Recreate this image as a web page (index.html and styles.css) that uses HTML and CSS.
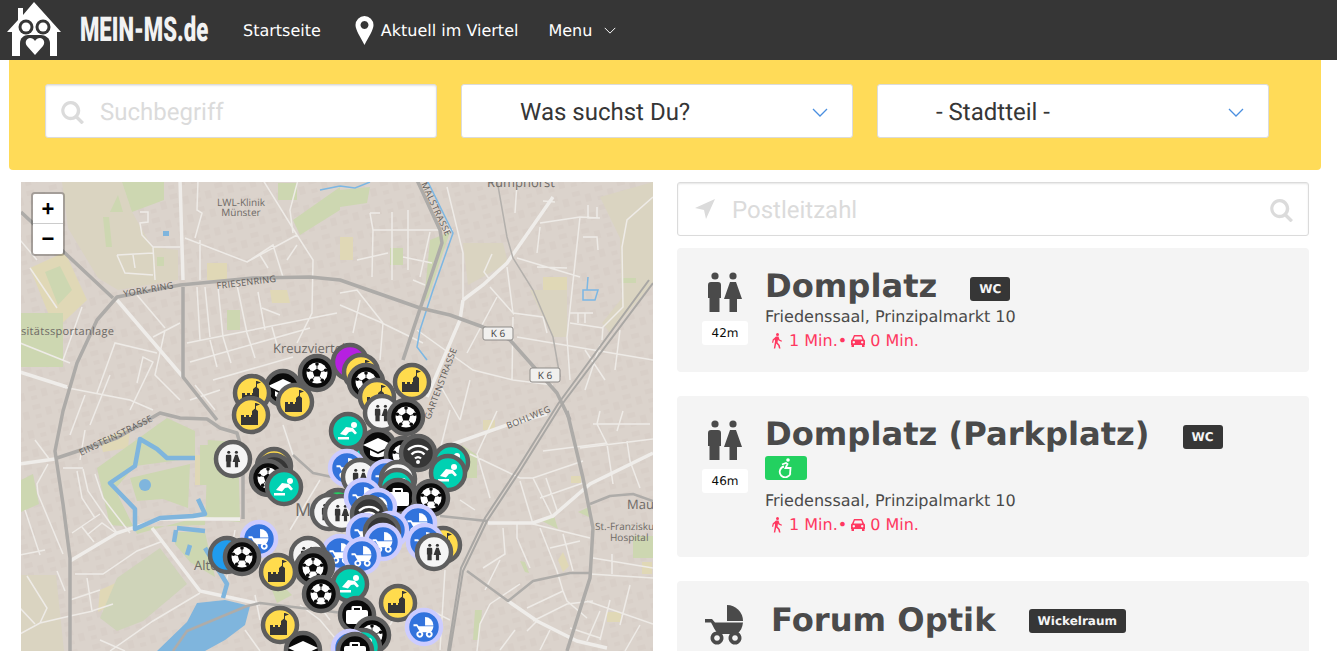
FILE: index.html
```html
<!DOCTYPE html>
<html>
<head>
  <title>MEIN-MS.de</title>
  <link rel="stylesheet" href="styles.css">
</head>
<body>
  <!-- Shared icons -->
  <svg class="icon-defs" width="0" height="0">
    <defs>
      <symbol id="icon-wc" viewBox="0 0 34 40">
        <circle cx="7" cy="4" r="3.600"/>
        <circle cx="25" cy="4" r="3.600"/>
        <path d="M0 13a3 3 0 0 1 3-3h7a3 3 0 0 1 3 3v13h-1.500v14H1.500V26H0z"/>
        <path d="M22 10h6l6 17h-5v13h-7.500V27H16z"/>
      </symbol>
      <symbol id="icon-pram" viewBox="0 0 40 40">
        <path d="M22 0a16 16 0 0 1 16 16H22z"/>
        <path d="M0 14h7l3 3.500h28c-.5 5-2.500 9-6 11.500H13.500C10 26 8 21 6 17.500H0z"/>
        <path fill-rule="evenodd" d="M12 26.500a6.500 6.500 0 1 0 .01 0zm0 3.700a2.800 2.800 0 1 1-.01 0zM30 26.500a6.500 6.500 0 1 0 .01 0zm0 3.700a2.800 2.800 0 1 1-.01 0z"/>
      </symbol>
      <symbol id="icon-walk" viewBox="0 0 12 16">
        <circle cx="6.500" cy="1.600" r="1.500"/>
        <path d="M5 3.500h2.500l1 3 2.500 1.200-.5 1-3-1.300-.5-1-.5 3 2.200 2.500.8 3.600H8l-.8-3-2-2-1 5H2.800l1.200-7-.2-2-1 .8-.6 2.500H1l.7-3.300z"/>
      </symbol>
      <symbol id="icon-car" viewBox="0 0 14 12">
        <path fill-rule="evenodd" d="M3 0h8l2 4.500a1.500 1.500 0 0 1 1 1.500v4h-.5v2h-2.500v-2H3v2H.5v-2H0V6a1.500 1.500 0 0 1 1-1.500zm.8 1.500L2.700 4.500h8.600l-1.100-3zM2.800 6a1.200 1.200 0 1 0 .01 0zm8.400 0a1.200 1.200 0 1 0 .01 0z"/>
      </symbol>
      <symbol id="icon-search" viewBox="0 0 24 24">
        <path fill-rule="evenodd" d="M10 0a10 10 0 0 1 8 16l6 6-2.500 2.500-6-6A10 10 0 1 1 10 0zm0 3.500a6.500 6.500 0 1 0 .01 0z"/>
      </symbol>
      <symbol id="icon-chevron" viewBox="0 0 16 9">
        <path d="M1 1l7 7 7-7" fill="none" stroke="currentColor" stroke-width="1.300"/>
      </symbol>

      <!-- Map marker glyphs, centred on 0,0 -->
      <g id="g-castle" class="glyph-dark">
        <path d="M-10 10V0h3v2h2V0h3v2h2V0h1v-4l3-2.500 3 2.500v14zM4-6v-6h1l4 1.500-4 1.500v3z"/>
      </g>
      <g id="g-ball">
        <circle r="10.500" class="glyph-white"/>
        <path class="glyph-black" d="M0-4.500l4.300 3.100-1.600 5h-5.400l-1.600-5z"/>
        <path class="ball-seam" d="M0-4.500V-8M4.300-1.400l3.300-1M2.700 3.600l2 2.800M-2.700 3.600l-2 2.800M-4.300-1.400l-3.300-1"/>
        <circle cy="-9" r="1.800" class="glyph-black"/>
        <circle cx="8.600" cy="-2.800" r="1.800" class="glyph-black"/>
        <circle cx="5.300" cy="7.300" r="1.800" class="glyph-black"/>
        <circle cx="-5.300" cy="7.300" r="1.800" class="glyph-black"/>
        <circle cx="-8.600" cy="-2.800" r="1.800" class="glyph-black"/>
      </g>
      <g id="g-cap" class="glyph-white">
        <path d="M0-9L15-2 0 5-15-2zM-8 3l8 4 8-4v5c-4 3-12 3-16 0z"/>
      </g>
      <g id="g-wc" class="glyph-dark">
        <use href="#icon-wc" x="-7.500" y="-8.500" width="15" height="17"/>
      </g>
      <g id="g-swim" class="glyph-white">
        <circle cx="6" cy="-6" r="3"/>
        <path d="M-8 3l6-7 7 1 4 5-2 1.500-3-3-3 .5-3 3.500zM-10 6h11v2.500h-11z"/>
      </g>
      <g id="g-pram" class="glyph-white">
        <use href="#icon-pram" x="-11" y="-10" width="22" height="21"/>
      </g>
      <g id="g-wifi">
        <path class="glyph-line" d="M-10-3a14 14 0 0 1 20 0M-6.500 1.500a9 9 0 0 1 13 0M-3 5.500a4.500 4.500 0 0 1 6 0"/>
        <circle cy="9" r="2" class="glyph-white"/>
      </g>
      <g id="g-case" class="glyph-white">
        <path fill-rule="evenodd" d="M-3.500-9h7a1.500 1.500 0 0 1 1.500 1.500V-5H9a2 2 0 0 1 2 2V7a2 2 0 0 1-2 2H-9a2 2 0 0 1-2-2V-3a2 2 0 0 1 2-2h3.500v-2.500A1.500 1.500 0 0 1-3.500-9zm.5 2v2h6v-2z"/>
      </g>

      <g id="m-castle"><circle r="17" class="m-ring m-yellow"/><use href="#g-castle"/></g>
      <g id="m-ball"><circle r="17" class="m-ring m-black"/><use href="#g-ball"/></g>
      <g id="m-cap"><circle r="17" class="m-ring m-black"/><use href="#g-cap"/></g>
      <g id="m-case"><circle r="17" class="m-ring m-black"/><use href="#g-case"/></g>
      <g id="m-wc"><circle r="17" class="m-ring m-light"/><use href="#g-wc"/></g>
      <g id="m-swim"><circle r="17" class="m-ring m-teal"/><use href="#g-swim"/></g>
      <g id="m-wifi"><circle r="17" class="m-ring m-dark"/><use href="#g-wifi"/></g>
      <g id="m-pram"><circle r="17" class="m-ring m-blue"/><use href="#g-pram"/></g>
      <g id="m-purple"><circle r="17" class="m-ring m-purple"/></g>
      <g id="m-sky"><circle r="17" class="m-ring m-sky"/></g>
      <g id="m-green"><circle r="17" class="m-ring m-green"/></g>

      <pattern id="blocks" width="23" height="19" patternUnits="userSpaceOnUse" patternTransform="rotate(-14)">
        <rect x="2" y="2" width="8" height="5" class="block"/>
        <rect x="14" y="7" width="6" height="8" class="block"/>
        <rect x="3" y="12" width="6" height="4" class="block"/>
      </pattern>
    </defs>
  </svg>

  <nav class="navbar">
    <a class="brand" href="#">
      <svg class="brand-house" viewBox="0 0 54 54">
        <path class="house-white" d="M27 0l27 30h-4v24H5V30H0L11 18V6h5v7z"/>
        <path class="house-dark" d="M13 54V41c0-5 4-8 8-8h13c4 0 9 3 9 8v13z"/>
        <circle cx="19" cy="25" r="7.500" class="house-dark"/>
        <circle cx="36" cy="25" r="7.500" class="house-dark"/>
        <circle cx="19" cy="25" r="4.500" class="house-white"/>
        <circle cx="36" cy="25" r="4.500" class="house-white"/>
        <path class="house-white" d="M28 53L20 44c-3-4 0-8 3-8 2 0 4 1 5 3 1-2 3-3 5-3 3 0 6 4 3 8z"/>
      </svg>
      <span class="brand-text">MEIN-MS.de</span>
    </a>
    <a class="nav-item" href="#">Startseite</a>
    <a class="nav-item" href="#">
      <svg class="nav-pin" viewBox="0 0 18 29">
        <path fill-rule="evenodd" d="M9 0a9 9 0 0 1 9 9c0 5-5 12-9 20C5 21 0 14 0 9a9 9 0 0 1 9-9zm0 5a4 4 0 1 0 .01 0z"/>
      </svg>
      Aktuell im Viertel
    </a>
    <a class="nav-item nav-menu" href="#">
      Menu
      <svg class="nav-chevron"><use href="#icon-chevron"/></svg>
    </a>
  </nav>

  <section class="filters">
    <div class="field">
      <svg class="field-search"><use href="#icon-search"/></svg>
      <span class="placeholder">Suchbegriff</span>
    </div>
    <div class="field field-select">
      <span>Was suchst Du?</span>
      <svg class="select-chevron"><use href="#icon-chevron"/></svg>
    </div>
    <div class="field field-select">
      <span>- Stadtteil -</span>
      <svg class="select-chevron"><use href="#icon-chevron"/></svg>
    </div>
  </section>

  <main class="content">
    <div class="map">
      <svg class="map-svg" viewBox="21 182 632 469">
        <rect x="21" y="182" width="632" height="469" class="land"/>
        <rect x="21" y="182" width="632" height="469" fill="url(#blocks)"/>

        <!-- Land use -->
        <path class="tan" d="M62 182h60l10 30 20 35 26 3v30l-60 10-20-12-30-50zM600 197l53-15v101l-43 50-8-10 20-25-2-60zM530 290h37v47h-14zM463 243h40l5 20-40 22zM21 575h35l8 76H21z"/>
        <path class="beige" d="M30 268l35-16 22 48-32 30zM207 263h20v17h-20zM270 290h17l3 13h-18zM340 237h13v23h-13zM543 277h24v13h-24zM483 420h12v10h-12zM563 552l6 14-6 6-5-12zM571 476h10v7h-10zM642 562h10v12h-10zM607 612h14v10h-14zM100 440l30-12-2 20-25 4zM195 455h25v30h-25zM100 590l18-8-5 22-15 8z"/>
        <path class="green" d="M122 182h42v18l-32 12zM110 212l8-17 5 17zM103 217h6l3 30h-6zM45 272l15-6 12 24-14 15zM21 313h42v54H21zM21 480l12-6 6 30-18 8zM157 257h7v9h-7zM227 310h13v20h-13zM278 183h19v17h-19zM293 220l47-33v23l-40 25zM340 190l30-3-3 16-27 4zM390 248h13v17h-13zM430 240l20-8-22 66-4 4zM622 278h14v5h-14zM462 445l15 10v23h-15zM540 520l14-4 4 13zM578 512l13-6v12zM520 561l5 1 4 11-4-1zM633 536h20v22h-20zM475 610h7l-3 30h-6zM272 590l12-3 8 8-15 8z"/>
        <path class="green" d="M97 468l70-50 28 13v27l-60 8-20 23 22 45 58-16 45 4-2-80-30-2-3 85-70 2-25-2z"/>
        <path class="green" d="M130 478l60-14-2 44-25-9-26 2zM175 532l30 0 10 45-25-15-15-18zM200 445h20v40h-20z"/>
        <path class="park" d="M100 618l17-40 43-30 27 36-44 37-26 10z"/>
        <path class="water" d="M157 651l30-29 10-19 28-3 25 6-5 19-20 15-20 11z"/>
        <circle cx="145" cy="485" r="6" class="water"/>
        <rect x="163" y="231" width="6" height="5" class="water"/>

        <!-- Streets -->
        <path class="street" d="M140 212h8v10l-8 1 2 12 11 12h27M153 247l2 33M117 255l36-2M117 255l8 18 28 2M133 255l2 13M185 238l62 24 50-27M297 235l16 25-1 53-15 30M263 180l34 55M298 180l-8 30 3 23M247 262l26-17 10 32M260 255l8 13M287 260l10-15M198 180l-1 30 5 3-7 25M200 240v40M218 287l5 50M197 287l3 53M205 287l5 50M237 285l10 48M258 292l7 38M262 308l18 7M187 343l150-30M190 362l120-34M213 380l80-23M210 340l7 27M223 337l8 26M247 333l8 25M272 327l7 25M153 337l27-14M137 295l28 33M97 393l18-50 42 10M137 383l6-26 10 5-23 48M63 360l19-53M20 343l50 20M20 240l17 20M30 268l27 40M20 372l47 15M63 387l67 13 23 10M85 395l-15 40M110 375l-20 50M165 330l-10 45 25 25M190 400l30-10M195 385l20 25"/>
        <path class="street" d="M370 213h10M370 213l3 17-1 47M373 230h80M392 212v68M408 210v60M430 232l-10 45M357 260l31-7M403 257l29 6M413 280l12 5M340 305l40 17 43 21M340 293l17-3 26 33M360 300l-7 33M383 323l-3 37M417 330l56 40 40 10 40 5M447 187l16 66v47M490 287l23 26-6-46M497 297l-30 56M513 313l30 4 4 16M513 317l-1 63M517 337l136 23M580 217l-13 120 3 43M540 223l40-6 20 1M540 227l-3 26M517 258l63 19M537 267l30 1M583 237h14l1 13M588 205v13h9v-11M570 313h23M570 323l33 5M578 313v10M585 313v10M653 197l-26 23-5 27 1 60-20 20-1 13M543 201l12 1M517 183l-2 30M490 280l-6-8 8-18M585 350l20 30M620 330l-5 40M600 345l-15 45M440 385l20 35M470 380l-10 40"/>
        <path class="street" d="M38 494l25 60M38 494l-1-10 11-20M63 468h20M77 471l5 27 13 20M83 469l5 22 29 42M95 474l8 24 27 35M72 533l28-19M82 527l12 15M87 535l15-12 14 10M95 545l10-5M27 576l20 32-7 15M20 608l15 16M57 571l8 20M20 634l20-11 30-7 23-5M87 578l5 33 21-7M75 574h28l34-23 26-10M110 651l43-30 47-28M100 640l25 11M25 510l15 45M20 555l25-5M35 440l15 20M85 430l-5 30M100 590l-30 10"/>
        <path class="street" d="M497 411l-20 43 13 44M470 454l50 24h13l50-17M520 481l13 43M533 478l20 40M546 478l12 35M540 498l43-15M543 451l64-8M593 424h57M580 448l73-9M600 411l-3 13 10 20 6 40M623 411l-6 20M627 441l3 20 10 27M533 524l57 14M540 528l17 43 6 20 4 10 20 17M503 528l2 26-22 14M517 524v14l13 30M563 534l10 37M550 548l30-7M590 574l63 4M612 554v20M593 558l60 10M587 601l66 23M490 604l30-20M490 604l-10 20-3 27M527 608l36-17M533 621l34-17 26-3M527 631l10-10M600 611l-13 30M570 628l30 10M610 600l-10 40M630 585l-10 40M640 625l-15 26M500 650l15-20M540 650l10-20M450 410l-10 40M430 440l15 40M500 560l-15 30M460 500l15 10M445 570l-5 80M430 610l20 10"/>
        <path class="street" d="M293 455l-10-30M320 480l-30 50M200 518l40 2M235 530l-10 60M255 595l5 25M245 630l15 21M300 605l20 15 25 30M390 625l15-25M330 620l-15-20"/>
        <path class="road-wide" d="M180 180l3 100M117 300l66 77M70 561l47-28 43-14h80M152 528l48 63 60 13M20 464l35-5M20 372l47 15M463 300l20-15 24-22 46-66M463 300l-3 20-33 77M508 601l29 20 40 20 30 7M488 523h45l20-7 37-32 63-31M453 444l57-20 37-10"/>

        <!-- Canal and ring roads -->
        <path class="canal" d="M427 180l26 53-20 57-13 40-3 17 10 13M320 190l20-4M340 186l15 2 15-6M588 277l-1 13M583 290h15l-3 10h-12z"/>
        <path class="moat" d="M195 458h-28l-10-9-17-10-5 27-25 17 25 26v20l25-11 33-2 12-2-7-15M205 548l22 36-4 14M177 528l28 3M176 530l-2 12M190 545l-3 10"/>
        <path class="road-gray" d="M70 651v-93l-7-54-8-53 8-40 14-48 20-43 20-23 63-12 73-7 57-1 30 3 80 28 30 7 33 12 27 13 47 53 13 27M417 180l23 50 2 13-39 117M21 212l92 86M183 287v90l34 43M57 458l60-20 43-25 20 5 27 1 13 9 17 5 6 21v65"/>
        <path class="road-gray" d="M567 411l16 67 10 50-3 50-23 73"/>
        <path class="road-gray-thin" d="M590 504l20-8 23-2 20 7M440 516l47 5M467 571l41 30 25-20 37-8h20M173 651l14-20 60-25 13-3 83 10M293 455l20 18 19 4"/>
        <path class="road-thin" d="M497 180l10 57 6 21 20 32 20 47 7 40"/>
        <path class="rail" d="M653 283l-93 124-40 64-33 50-24 50-13 80M649 280l-91 124-40 64-33 50-24 50-13 83"/>

        <!-- Map labels -->
        <text x="241" y="206" class="label" text-anchor="middle">LWL-Klinik</text>
        <text x="241" y="216" class="label" text-anchor="middle">Münster</text>
        <text x="21" y="335" class="label label-wide">sitätssportanlage</text>
        <text x="273" y="353" class="label label-big">Kreuzviertel</text>
        <text x="487" y="187" class="label label-big">Rumphorst</text>
        <text x="295" y="516" class="label label-huge">M</text>
        <text x="627" y="509" class="label label-big">Mau</text>
        <text x="595" y="530" class="label">St.-Franziskus</text>
        <text x="610" y="541" class="label">Hospital</text>
        <text x="194" y="570" class="label label-big">Alte</text>
        <text class="road-label" transform="translate(124 297) rotate(-10)">YORK-RING</text>
        <text class="road-label" transform="translate(217 289) rotate(-7)">FRIESENRING</text>
        <text class="road-label" transform="translate(81 456) rotate(-26)">EINSTEINSTRASSE</text>
        <text class="road-label" transform="translate(421 184) rotate(65)">MALSTRASSE</text>
        <text class="road-label" transform="translate(430 420) rotate(-69)">GARTENSTRASSE</text>
        <text class="road-label" transform="translate(508 429) rotate(-22)">BOHLWEG</text>

        <rect x="483" y="327" width="30" height="13" rx="2" class="shield"/>
        <text x="498" y="337" class="shield-text" text-anchor="middle">K 6</text>
        <rect x="530" y="368" width="30" height="14" rx="2" class="shield"/>
        <text x="545" y="379" class="shield-text" text-anchor="middle">K 6</text>

        <!-- Markers, painted back to front -->
        <use href="#m-purple" x="350" y="362"/>
        <use href="#m-castle" x="361" y="372"/>
        <use href="#m-ball" x="317" y="373"/>
        <use href="#m-ball" x="366" y="382"/>
        <use href="#m-cap" x="283" y="388"/>
        <use href="#m-castle" x="252" y="393"/>
        <use href="#m-castle" x="251" y="415"/>
        <use href="#m-castle" x="295" y="402"/>
        <use href="#m-castle" x="377" y="397"/>
        <use href="#m-castle" x="412" y="382"/>
        <use href="#m-wc" x="382" y="413"/>
        <use href="#m-ball" x="406" y="417"/>
        <use href="#m-swim" x="348" y="431"/>
        <use href="#m-swim" x="368" y="462"/>
        <use href="#m-swim" x="451" y="462"/>
        <use href="#m-cap" x="378" y="447"/>
        <use href="#m-ball" x="403" y="455"/>
        <use href="#m-swim" x="448" y="473"/>
        <use href="#m-wifi" x="418" y="453"/>
        <use href="#m-castle" x="274" y="466"/>
        <use href="#m-wifi" x="274" y="472"/>
        <use href="#m-ball" x="268" y="478"/>
        <use href="#m-swim" x="284" y="487"/>
        <use href="#m-wc" x="233" y="459"/>
        <use href="#m-pram" x="347" y="468"/>
        <use href="#m-wc" x="360" y="477"/>
        <use href="#m-pram" x="386" y="478"/>
        <use href="#m-wc" x="398" y="479"/>
        <use href="#m-swim" x="397" y="487"/>
        <use href="#m-case" x="398" y="497"/>
        <use href="#m-ball" x="431" y="498"/>
        <use href="#m-green" x="338" y="507"/>
        <use href="#m-wc" x="329" y="512"/>
        <use href="#m-wc" x="342" y="513"/>
        <use href="#m-pram" x="363" y="497"/>
        <use href="#m-pram" x="378" y="507"/>
        <use href="#m-wifi" x="369" y="514"/>
        <use href="#m-pram" x="418" y="523"/>
        <use href="#m-pram" x="390" y="530"/>
        <use href="#m-pram" x="365" y="532"/>
        <use href="#m-wifi" x="382" y="532"/>
        <use href="#m-castle" x="443" y="545"/>
        <use href="#m-pram" x="425" y="542"/>
        <use href="#m-wc" x="434" y="552"/>
        <use href="#m-pram" x="383" y="542"/>
        <use href="#m-pram" x="340" y="553"/>
        <use href="#m-pram" x="362" y="556"/>
        <use href="#m-pram" x="259" y="539"/>
        <use href="#m-sky" x="227" y="555"/>
        <use href="#m-ball" x="242" y="557"/>
        <use href="#m-wc" x="308" y="555"/>
        <use href="#m-wifi" x="316" y="566"/>
        <use href="#m-castle" x="278" y="572"/>
        <use href="#m-ball" x="313" y="568"/>
        <use href="#m-swim" x="350" y="584"/>
        <use href="#m-ball" x="321" y="594"/>
        <use href="#m-castle" x="398" y="603"/>
        <use href="#m-case" x="357" y="615"/>
        <use href="#m-pram" x="424" y="627"/>
        <use href="#m-castle" x="280" y="625"/>
        <use href="#m-cap" x="303" y="650"/>
        <use href="#m-ball" x="372" y="635"/>
        <use href="#m-swim" x="363" y="647"/>
        <use href="#m-pram" x="350" y="648"/>
        <use href="#m-case" x="355" y="651"/>
      </svg>
      <div class="zoom-control">
        <a href="#">+</a>
        <a href="#">−</a>
      </div>
    </div>

    <div class="results">
      <div class="field plz">
        <svg class="plz-arrow" viewBox="0 0 20 20"><path d="M20 0L11 20 9 11 0 9z"/></svg>
        <span class="placeholder">Postleitzahl</span>
        <svg class="plz-search"><use href="#icon-search"/></svg>
      </div>

      <article class="card">
        <div class="card-side">
          <svg class="card-icon"><use href="#icon-wc"/></svg>
          <span class="distance">42m</span>
        </div>
        <div class="card-body">
          <div class="card-head">
            <h2>Domplatz</h2>
            <span class="tag">WC</span>
          </div>
          <p class="address">Friedenssaal, Prinzipalmarkt 10</p>
          <p class="times">
            <svg class="time-walk"><use href="#icon-walk"/></svg>1 Min.•
            <svg class="time-car"><use href="#icon-car"/></svg>0 Min.
          </p>
        </div>
      </article>

      <article class="card card-tall">
        <div class="card-side">
          <svg class="card-icon"><use href="#icon-wc"/></svg>
          <span class="distance">46m</span>
        </div>
        <div class="card-body">
          <div class="card-head">
            <h2>Domplatz (Parkplatz)</h2>
            <span class="tag">WC</span>
          </div>
          <span class="tag tag-access">
            <svg class="access-icon" viewBox="0 0 16 20">
              <circle cx="10" cy="2" r="1.800" class="access-fill"/>
              <path class="access-line" d="M4 6.500l4-1.500 1.500 1-2 4h5l-.5 6.500M6 8.500a5.500 5.500 0 1 0 6.500 7"/>
            </svg>
          </span>
          <p class="address">Friedenssaal, Prinzipalmarkt 10</p>
          <p class="times">
            <svg class="time-walk"><use href="#icon-walk"/></svg>1 Min.•
            <svg class="time-car"><use href="#icon-car"/></svg>0 Min.
          </p>
        </div>
      </article>

      <article class="card card-pram">
        <div class="card-side">
          <svg class="card-icon card-icon-pram"><use href="#icon-pram"/></svg>
        </div>
        <div class="card-body">
          <div class="card-head">
            <h2>Forum Optik</h2>
            <span class="tag">Wickelraum</span>
          </div>
        </div>
      </article>
    </div>
  </main>
</body>
</html>
```

FILE: styles.css
```css
html {
  overflow: hidden;
}

body {
  margin: 0;
  font-family: "DejaVu Sans", sans-serif;
  color: #4a4a4a;
  background: #fff;
  text-rendering: geometricPrecision;
}

a {
  color: inherit;
  text-decoration: none;
}

.icon-defs {
  position: absolute;
}

/* Top bar */
.navbar {
  display: flex;
  align-items: center;
  height: 60px;
  background: #363636;
  color: #fff;
  font-size: 16px;
}

.brand {
  display: flex;
  flex: none;
  align-items: center;
  padding-left: 7px;
  width: 236px;
  box-sizing: border-box;
}

.brand-house {
  flex: none;
  width: 54px;
  height: 54px;
  margin-top: -2px;
}

.house-white { fill: #fff; }
.house-dark { fill: #363636; }

.brand-text {
  display: inline-block;
  flex: none;
  margin-left: 19px;
  font-family: Roboto, sans-serif;
  font-weight: 900;
  font-size: 34px;
  color: #f2f2f2;
  transform: scaleX(.65);
  transform-origin: left center;
  white-space: nowrap;
}

.nav-item {
  display: flex;
  align-items: center;
  margin-left: 30px;
  font-size: 16px;
}

.brand + .nav-item {
  margin-left: 7px;
}

.brand + .nav-item + .nav-item {
  margin-left: 32px;
}

.nav-pin {
  width: 19px;
  height: 29px;
  margin: 0 7px 0 2px;
  fill: #fff;
}

.nav-chevron {
  width: 12px;
  height: 7px;
  margin-left: 12px;
  color: #fff;
}

/* Yellow filter band */
.filters {
  display: flex;
  gap: 24px;
  height: 110px;
  margin: 0 16px 0 9px;
  padding: 24px 36px 0;
  box-sizing: border-box;
  background: #ffdb58;
  border-radius: 0 0 4px 4px;
}

.field {
  position: relative;
  display: flex;
  align-items: center;
  width: 392px;
  height: 54px;
  box-sizing: border-box;
  background: #fff;
  border: 1px solid #dbdbdb;
  border-radius: 3px;
  box-shadow: inset 0 1px 2px rgba(10, 10, 10, .1);
  font-family: Roboto, sans-serif;
  font-size: 24px;
  color: #363636;
}

.field span {
  padding-top: 2px;
}

.placeholder {
  color: #dbdbdb;
}

.field-search {
  width: 23px;
  height: 23px;
  margin: 2px 16px 0 15px;
  fill: #dbdbdb;
}

.field-select {
  padding-left: 58px;
  box-shadow: none;
}

.select-chevron {
  position: absolute;
  right: 24px;
  top: 23px;
  width: 16px;
  height: 9px;
  color: #4a8fe0;
}

/* Map and result list */
.content {
  display: flex;
  gap: 24px;
  padding: 12px 28px 0 21px;
}

.map {
  position: relative;
  flex: none;
  width: 632px;
  height: 469px;
  overflow: hidden;
}

.map-svg {
  display: block;
  width: 632px;
  height: 469px;
}

.land { fill: #dbd3cc; }
.tan { fill: #dad4c1; }
.green { fill: #cdd7b1; }
.park { fill: #cfd4b9; }
.beige { fill: #e0d8b6; }
.water { fill: #7fb5dd; }
.block { fill: #d8cfc8; }

.street { fill: none; stroke: #eeebe7; stroke-width: 1.500; }
.road-wide { fill: none; stroke: #efedea; stroke-width: 3.500; }
.road-gray { fill: none; stroke: #adaba8; stroke-width: 3.500; stroke-linejoin: round; }
.road-gray-thin { fill: none; stroke: #aeaca9; stroke-width: 2.500; stroke-linejoin: round; }
.road-thin { fill: none; stroke: #b3b0ac; stroke-width: 1.500; }
.rail { fill: none; stroke: #a9a7a4; stroke-width: 2; }
.canal { fill: none; stroke: #7cb7e3; stroke-width: 1.500; }
.moat { fill: none; stroke: #7fb5dd; stroke-width: 4.500; stroke-linejoin: round; }

.label {
  font-family: "Open Sans", sans-serif;
  font-size: 10px;
  fill: #6e6a66;
}

.label-wide { font-size: 11px; letter-spacing: .3px; }
.label-big { font-size: 13px; }
.label-huge { font-size: 18px; }

.road-label {
  font-family: "Open Sans", sans-serif;
  font-size: 9px;
  letter-spacing: .4px;
  fill: #5e5b58;
}

.shield { fill: #f1f0ee; stroke: #8d8a87; }
.shield-text { font-family: "Open Sans", sans-serif; font-size: 10px; fill: #444; }

.m-ring { stroke: #5e5e5e; stroke-width: 4.500; }
.m-yellow { fill: #ffdb4d; }
.m-black { fill: #0a0a0a; }
.m-light { fill: #f5f5f5; }
.m-teal { fill: #00d1b2; }
.m-dark { fill: #363636; }
.m-blue { fill: #3273dc; stroke: #ccccff; }
.m-purple { fill: #b620e0; }
.m-sky { fill: #209cee; }
.m-green { fill: #23d160; }

.glyph-dark { fill: #363636; }
.glyph-white { fill: #fff; }
.glyph-black { fill: #0a0a0a; }
.glyph-line { fill: none; stroke: #fff; stroke-width: 2.300; }
.ball-seam { fill: none; stroke: #0a0a0a; stroke-width: .8; }

.zoom-control {
  position: absolute;
  left: 10px;
  top: 10px;
  width: 30px;
  border: 2px solid rgba(0, 0, 0, .25);
  border-radius: 4px;
  background-clip: padding-box;
}

.zoom-control a {
  display: block;
  height: 30px;
  background: #fff;
  font: bold 22px/30px "Liberation Sans", sans-serif;
  text-align: center;
  color: #000;
}

.zoom-control a:first-child {
  border-bottom: 1px solid #ccc;
  height: 29px;
  border-radius: 2px 2px 0 0;
}

.zoom-control a:last-child {
  border-radius: 0 0 2px 2px;
}

.results {
  flex: none;
  width: 632px;
}

.plz {
  width: 632px;
  margin-bottom: 12px;
}

.plz-arrow {
  width: 20px;
  height: 20px;
  margin: 0 17px 0 17px;
  fill: #dbdbdb;
}

.plz-search {
  position: absolute;
  right: 15px;
  top: 16px;
  width: 23px;
  height: 23px;
  fill: #dbdbdb;
}

.card {
  display: flex;
  height: 124px;
  margin-bottom: 24px;
  padding: 24px 0 0 25px;
  box-sizing: border-box;
  background: #f4f4f4;
  border-radius: 4px;
}

.card-tall {
  height: 161px;
}

.card-side {
  display: flex;
  flex-direction: column;
  align-items: center;
  width: 46px;
  margin-right: 17px;
}

.card-icon {
  width: 34px;
  height: 40px;
  fill: #4a4a4a;
}

.card-icon-pram {
  flex: none;
  width: 40px;
  height: 40px;
}

.card-pram .card-body {
  margin-left: 6px;
}

.card-pram .card-head {
  margin-top: 1px;
}

.card-pram .card-head .tag {
  margin-top: 2px;
}

.distance {
  margin-top: 9px;
  width: 46px;
  height: 24px;
  background: #fff;
  border-radius: 3px;
  font-size: 12px;
  line-height: 24px;
  text-align: center;
  color: #0a0a0a;
}

.card-head {
  display: flex;
  align-items: center;
  gap: 33px;
  height: 28px;
}

.card-head h2 {
  margin: 0;
  font-size: 32.2px;
  font-weight: bold;
  line-height: 28px;
  color: #4a4a4a;
  white-space: nowrap;
}

.card-head .tag {
  margin-top: 6px;
}

.tag {
  display: inline-flex;
  align-items: center;
  justify-content: center;
  height: 24px;
  padding: 0 9px;
  background: #363636;
  border-radius: 3px;
  font-size: 12px;
  font-weight: bold;
  color: #f5f5f5;
}

.tag-access {
  display: flex;
  width: 42px;
  padding: 0;
  margin: 8px 0 9px;
  box-sizing: border-box;
  background: #23d160;
}

.access-icon {
  width: 16px;
  height: 20px;
}

.access-fill { fill: #fff; }
.access-line { fill: none; stroke: #fff; stroke-width: 1.800; }

.address {
  margin: 5px 0 0;
  font-size: 16px;
  line-height: 24px;
  color: #4a4a4a;
}

.times {
  display: flex;
  align-items: center;
  margin: 0;
  padding-left: 6px;
  font-size: 16px;
  line-height: 24px;
  color: #ff3860;
  fill: #ff3860;
}

.time-walk {
  width: 12px;
  height: 16px;
  margin-right: 6px;
}

.time-car {
  width: 14px;
  height: 12px;
  margin: 0 5px 0 4px;
}
```
